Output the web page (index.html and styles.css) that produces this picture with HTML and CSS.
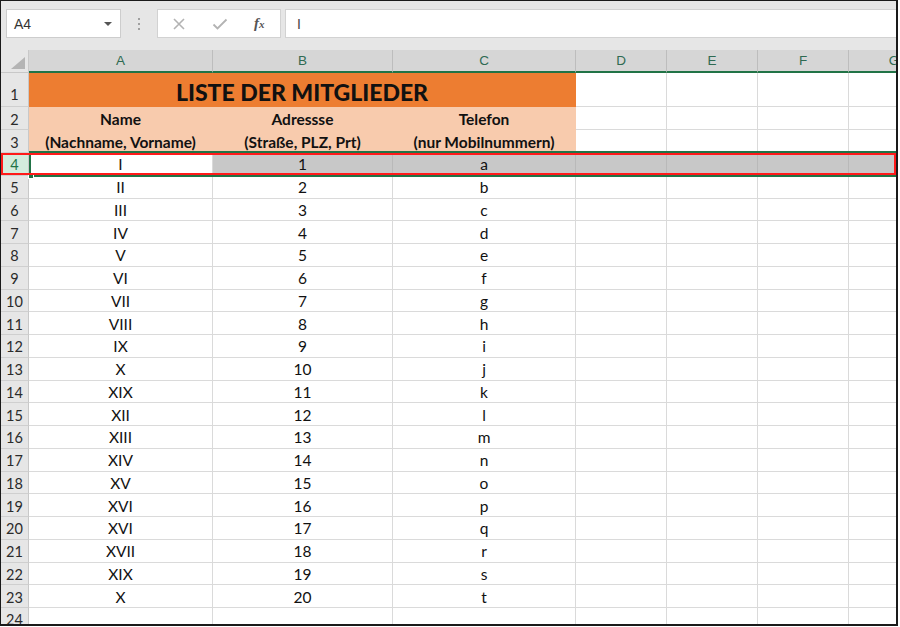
FILE: index.html
```html
<!DOCTYPE html>
<html lang="de">
<head>
<meta charset="utf-8">
<title>Liste der Mitglieder</title>
<link rel="stylesheet" href="styles.css">
</head>
<body>
<div class="frame">
  <div class="toolbar">
    <div class="namebox"><span class="nb-text">A4</span><span class="nb-caret"></span></div>
    <div class="grip"><i></i><i></i><i></i></div>
    <div class="fx-buttons">
      <svg class="fx-ico" width="14" height="14" viewBox="0 0 14 14"><path d="M2 2 L12 12 M12 2 L2 12" stroke="#b3b3b3" stroke-width="1.6" fill="none"/></svg>
      <svg class="fx-ico" width="16" height="14" viewBox="0 0 16 14"><path d="M1.5 7.5 L5.5 11.5 L14.5 2.5" stroke="#b3b3b3" stroke-width="1.8" fill="none"/></svg>
      <span class="fx-label">f<small>x</small></span>
    </div>
    <div class="formula-input">I</div>
  </div>
  <div class="sheet">
    <div class="grid">
      <div class="c corner"><span class="tri"></span></div>
      <div class="c colh">A</div><div class="c colh">B</div><div class="c colh">C</div><div class="c colh">D</div><div class="c colh">E</div><div class="c colh">F</div><div class="c colh">G</div>

      <div class="c rowh r1">1</div>
      <div class="c title">LISTE DER MITGLIEDER</div>
      <div class="c r1"></div><div class="c r1"></div><div class="c r1"></div><div class="c r1"></div>

      <div class="c rowh">2</div>
      <div class="c head top">Name</div><div class="c head top">Adressse</div><div class="c head top">Telefon</div>
      <div class="c"></div><div class="c"></div><div class="c"></div><div class="c"></div>

      <div class="c rowh">3</div>
      <div class="c head">(Nachname, Vorname)</div><div class="c head">(Straße, PLZ, Prt)</div><div class="c head">(nur Mobilnummern)</div>
      <div class="c"></div><div class="c"></div><div class="c"></div><div class="c"></div>

      <div class="c rowh selh">4</div>
      <div class="c active">I</div><div class="c sel">1</div><div class="c sel">a</div>
      <div class="c sel"></div><div class="c sel"></div><div class="c sel"></div><div class="c sel"></div>

      <div class="c rowh">5</div><div class="c">II</div><div class="c">2</div><div class="c">b</div><div class="c"></div><div class="c"></div><div class="c"></div><div class="c"></div>
      <div class="c rowh">6</div><div class="c">III</div><div class="c">3</div><div class="c">c</div><div class="c"></div><div class="c"></div><div class="c"></div><div class="c"></div>
      <div class="c rowh">7</div><div class="c">IV</div><div class="c">4</div><div class="c">d</div><div class="c"></div><div class="c"></div><div class="c"></div><div class="c"></div>
      <div class="c rowh">8</div><div class="c">V</div><div class="c">5</div><div class="c">e</div><div class="c"></div><div class="c"></div><div class="c"></div><div class="c"></div>
      <div class="c rowh">9</div><div class="c">VI</div><div class="c">6</div><div class="c">f</div><div class="c"></div><div class="c"></div><div class="c"></div><div class="c"></div>
      <div class="c rowh">10</div><div class="c">VII</div><div class="c">7</div><div class="c">g</div><div class="c"></div><div class="c"></div><div class="c"></div><div class="c"></div>
      <div class="c rowh">11</div><div class="c">VIII</div><div class="c">8</div><div class="c">h</div><div class="c"></div><div class="c"></div><div class="c"></div><div class="c"></div>
      <div class="c rowh">12</div><div class="c">IX</div><div class="c">9</div><div class="c">i</div><div class="c"></div><div class="c"></div><div class="c"></div><div class="c"></div>
      <div class="c rowh">13</div><div class="c">X</div><div class="c">10</div><div class="c">j</div><div class="c"></div><div class="c"></div><div class="c"></div><div class="c"></div>
      <div class="c rowh">14</div><div class="c">XIX</div><div class="c">11</div><div class="c">k</div><div class="c"></div><div class="c"></div><div class="c"></div><div class="c"></div>
      <div class="c rowh">15</div><div class="c">XII</div><div class="c">12</div><div class="c">l</div><div class="c"></div><div class="c"></div><div class="c"></div><div class="c"></div>
      <div class="c rowh">16</div><div class="c">XIII</div><div class="c">13</div><div class="c">m</div><div class="c"></div><div class="c"></div><div class="c"></div><div class="c"></div>
      <div class="c rowh">17</div><div class="c">XIV</div><div class="c">14</div><div class="c">n</div><div class="c"></div><div class="c"></div><div class="c"></div><div class="c"></div>
      <div class="c rowh">18</div><div class="c">XV</div><div class="c">15</div><div class="c">o</div><div class="c"></div><div class="c"></div><div class="c"></div><div class="c"></div>
      <div class="c rowh">19</div><div class="c">XVI</div><div class="c">16</div><div class="c">p</div><div class="c"></div><div class="c"></div><div class="c"></div><div class="c"></div>
      <div class="c rowh">20</div><div class="c">XVI</div><div class="c">17</div><div class="c">q</div><div class="c"></div><div class="c"></div><div class="c"></div><div class="c"></div>
      <div class="c rowh">21</div><div class="c">XVII</div><div class="c">18</div><div class="c">r</div><div class="c"></div><div class="c"></div><div class="c"></div><div class="c"></div>
      <div class="c rowh">22</div><div class="c">XIX</div><div class="c">19</div><div class="c">s</div><div class="c"></div><div class="c"></div><div class="c"></div><div class="c"></div>
      <div class="c rowh">23</div><div class="c">X</div><div class="c">20</div><div class="c">t</div><div class="c"></div><div class="c"></div><div class="c"></div><div class="c"></div>
      <div class="c rowh last">24</div><div class="c"></div><div class="c"></div><div class="c"></div><div class="c"></div><div class="c"></div><div class="c"></div><div class="c"></div>
    </div>
    <div class="row-select"></div>
    <div class="fill-handle"></div>
    <div class="red-box"></div>
  </div>
</div>
</body>
</html>
```

FILE: styles.css
```css
* { box-sizing: border-box; }
html, body { margin: 0; padding: 0; background: #fff; }
body { font-family: "Lato", "Liberation Sans", sans-serif; }

.frame {
  width: 898px;
  height: 626px;
  border-left: 1px solid #1a1a1a;
  border-top: 1px solid #1a1a1a;
  border-right: 2px solid #1a1a1a;
  border-bottom: 2px solid #1a1a1a;
  overflow: hidden;
  display: flex;
  flex-direction: column;
  background: #e6e6e6;
}

/* ---------- formula bar ---------- */
.toolbar {
  height: 49px;
  flex: none;
  display: flex;
  align-items: flex-start;
  padding: 8px 0 0 5px;
  background: #e6e6e6;
  white-space: nowrap;
}
.namebox {
  width: 115px;
  height: 29px;
  background: #fff;
  border: 1px solid #cdcdcd;
  display: flex;
  align-items: center;
  justify-content: space-between;
  padding: 0 8px 0 7px;
  font-family: "Liberation Sans", sans-serif;
  font-size: 14px;
  color: #333;
}
.nb-caret {
  width: 0; height: 0;
  border-left: 4px solid transparent;
  border-right: 4px solid transparent;
  border-top: 4px solid #555;
}
.grip {
  width: 36px;
  height: 29px;
  display: flex;
  flex-direction: column;
  align-items: center;
  justify-content: center;
  gap: 3px;
}
.grip i {
  display: block;
  width: 2px; height: 2px;
  background: #a0a0a0;
}
.fx-buttons {
  width: 124px;
  height: 29px;
  background: #fff;
  border: 1px solid #d2d2d2;
  display: flex;
  align-items: center;
  padding: 0 0 0 14px;
  gap: 26px;
}
.fx-label {
  font-family: "Liberation Serif", serif;
  font-style: italic;
  font-weight: bold;
  font-size: 15px;
  color: #555;
  margin-left: 0;
}
.fx-label small { font-size: 11px; }
.formula-input {
  margin-left: 4px;
  flex: 1;
  height: 29px;
  background: #fff;
  border: 1px solid #d2d2d2;
  border-right: none;
  padding: 0 0 0 11px;
  display: flex;
  align-items: center;
  font-family: "Liberation Sans", sans-serif;
  font-size: 14px;
  color: #444;
}

/* ---------- sheet ---------- */
.sheet {
  position: relative;
  flex: 1;
  overflow: hidden;
  background: #fff;
}
.grid {
  display: grid;
  grid-template-columns: 28px 184px 180px 183px 91px 91px 91px 91px;
  grid-template-rows: 23px 34px 23px 23px repeat(20, 22.75px) 23px;
  width: 941px;
  font-size: 15.5px;
  color: #111;
}
.c {
  border-right: 1px solid #dadada;
  border-bottom: 1px solid #dadada;
  display: flex;
  align-items: center;
  justify-content: center;
  white-space: nowrap;
  overflow: hidden;
  background: #fff;
  padding-top: 1px;
}
.corner {
  background: #e6e6e6;
  border-right: 1px solid #c8c8c8;
  border-bottom: 1px solid #c8c8c8;
  position: relative;
}
.tri {
  position: absolute;
  right: 3px;
  bottom: 3px;
  width: 0; height: 0;
  border-left: 14px solid transparent;
  border-bottom: 12px solid #b4b4b4;
}
.colh {
  background: #d6d6d6;
  border-right: 1px solid #bdbdbd;
  border-bottom: 2px solid #217346;
  color: #2f6a52;
  font-family: "Liberation Sans", sans-serif;
  font-size: 13.5px;
  padding-top: 0;
}
.rowh {
  background: #e6e6e6;
  border-right: 1px solid #c8c8c8;
  border-bottom: 1px solid #cfcfcf;
  color: #2b2b2b;
  font-size: 14.5px;
  padding-top: 2px;
}
.rowh.r1 { padding-top: 9px; }
.rowh.last { align-items: flex-start; padding-top: 3px; }
.selh { background: #d3ecdd; color: #217346; }

.title {
  grid-column: span 3;
  background: #ed7d31;
  border-color: #ed7d31;
  font-weight: 900;
  font-size: 23px;
  color: #111;
  padding-top: 4px;
}
.head {
  background: #f8cbad;
  border-color: #f8cbad;
  font-weight: bold;
  font-size: 15.5px;
}
.head.top { border-bottom-color: #f8cbad; }

.sel { background: #c8c8c8; border-right-color: #b9b9b9; }
.active { background: #fff; }

/* overlays */
.row-select {
  position: absolute;
  left: 28px;
  top: 101px;
  width: 870px;
  height: 26px;
  border-top: 2px solid #217346;
  border-bottom: 2px solid #217346;
  border-left: 2px solid #217346;
}
.fill-handle {
  position: absolute;
  left: 27px;
  top: 123px;
  width: 6px;
  height: 6px;
  background: #217346;
  border: 1px solid #fff;
}
.red-box {
  position: absolute;
  left: 0;
  top: 103px;
  width: 895px;
  height: 22px;
  border: 2px solid #ff1a1a;
}
```
